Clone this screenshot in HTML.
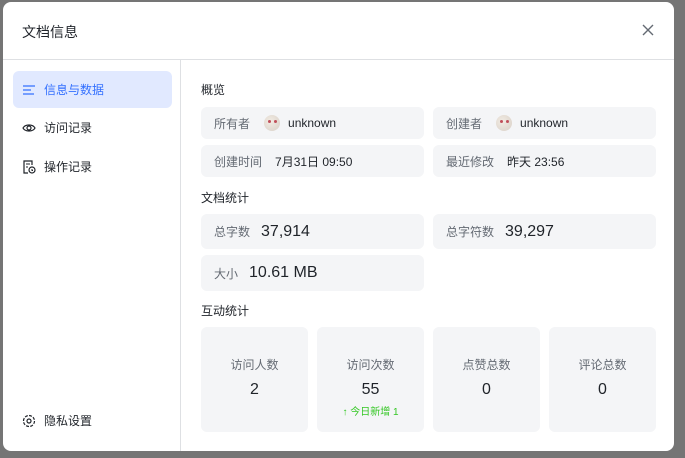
<!DOCTYPE html>
<html><head><meta charset="utf-8"><style>
*{margin:0;padding:0;box-sizing:border-box}
body{width:685px;height:458px;background:#757575;font-family:"Liberation Sans","Noto Sans CJK SC",sans-serif;position:relative;overflow:hidden;color:#1f2329}
.m{position:absolute;left:3px;top:2px;width:671px;height:449px;background:#fff;border-radius:8px;overflow:hidden}
.hd{position:absolute;left:0;top:0;width:100%;height:58px;border-bottom:1px solid #dee0e3}
.hd .t{position:absolute;left:19px;top:20px;font-size:14px}
.x{position:absolute;left:638px;top:21px}
.sd{position:absolute;left:0;top:58px;width:178px;bottom:0;border-right:1px solid #dee0e3}
.it{position:absolute;left:10px;width:159px;height:37px;border-radius:6px;font-size:12px;display:flex;align-items:center;padding-left:9px}
.it svg{margin-right:8px}
.on{background:#e1e9ff;color:#3370ff}
.sec{position:absolute;font-size:12px;color:#1f2329}
.c{position:absolute;background:#f4f5f7;border-radius:6px;font-size:12px;display:flex;align-items:center;padding-left:13px}
.c .l{color:#646a73;margin-right:13px}
.av{width:16px;height:16px;border-radius:50%;background:radial-gradient(circle at 40% 40%,#f2ece4,#d8cfc6);margin:0 8px 0 14px;position:relative}
.av:after{content:"";position:absolute;left:4px;top:5px;width:3px;height:3px;background:#c0505a;border-radius:50%;box-shadow:6px 0 #c0505a}
.b{font-size:16px;color:#1f2329}
.s{position:absolute;top:325px;width:107px;height:105px;background:#f4f5f7;border-radius:6px;text-align:center}
.s .a{margin-top:29px;font-size:12px;color:#646a73}
.s .n{margin-top:8px;font-size:16px}
.s .g{margin-top:4px;font-size:10px;color:#34c724}
</style></head><body>
<div class="m">
<div class="hd"><div class="t">文档信息</div>
<svg class="x" width="14" height="14" viewBox="0 0 14 14"><path d="M2 2L12 12M12 2L2 12" stroke="#646a73" stroke-width="1.4"/></svg></div>
<div class="sd">
<div class="it on" style="top:11px"><svg width="14" height="12" viewBox="0 0 14 12"><path d="M1 2H13M1 6H9M1 10H12" stroke="#3370ff" stroke-width="1.3"/></svg>信息与数据</div>
<div class="it" style="top:49px"><svg width="14" height="12" viewBox="0 0 14 12"><path d="M1 6C3 2 11 2 13 6C11 10 3 10 1 6Z" fill="none" stroke="#1f2329" stroke-width="1.2"/><circle cx="7" cy="6" r="2" fill="none" stroke="#1f2329" stroke-width="1.2"/></svg>访问记录</div>
<div class="it" style="top:88px"><svg width="14" height="14" viewBox="0 0 14 14"><path d="M6 13H2V1H10V5" fill="none" stroke="#1f2329" stroke-width="1.2"/><circle cx="10" cy="10" r="3" fill="none" stroke="#1f2329" stroke-width="1.2"/><path d="M4 4H8M4 7H6M10 9V10.5H11" stroke="#1f2329" stroke-width="1"/></svg>操作记录</div>
<div class="it" style="top:342px"><svg width="14" height="14" viewBox="0 0 14 14"><circle cx="7" cy="7" r="5.5" fill="none" stroke="#1f2329" stroke-width="1.2" stroke-dasharray="3 1.3"/><circle cx="7" cy="7" r="2" fill="none" stroke="#1f2329" stroke-width="1.2"/></svg>隐私设置</div>
</div>
<div class="sec" style="left:198px;top:79px">概览</div>
<div class="c" style="left:198px;top:105px;width:223px;height:32px"><span class="l" style="margin-right:0">所有者</span><span class="av"></span>unknown</div>
<div class="c" style="left:430px;top:105px;width:223px;height:32px"><span class="l" style="margin-right:0">创建者</span><span class="av"></span>unknown</div>
<div class="c" style="left:198px;top:143px;width:223px;height:32px"><span class="l">创建时间</span>7月31日 09:50</div>
<div class="c" style="left:430px;top:143px;width:223px;height:32px"><span class="l">最近修改</span>昨天 23:56</div>
<div class="sec" style="left:198px;top:187px">文档统计</div>
<div class="c" style="left:198px;top:212px;width:223px;height:35px"><span class="l" style="margin-right:11px">总字数</span><span class="b">37,914</span></div>
<div class="c" style="left:430px;top:212px;width:223px;height:35px"><span class="l" style="margin-right:11px">总字符数</span><span class="b">39,297</span></div>
<div class="c" style="left:198px;top:253px;width:223px;height:36px"><span class="l" style="margin-right:11px">大小</span><span class="b">10.61 MB</span></div>
<div class="sec" style="left:198px;top:300px">互动统计</div>
<div class="s" style="left:198px"><div class="a">访问人数</div><div class="n">2</div></div>
<div class="s" style="left:314px"><div class="a">访问次数</div><div class="n">55</div><div class="g">↑ 今日新增 1</div></div>
<div class="s" style="left:430px"><div class="a">点赞总数</div><div class="n">0</div></div>
<div class="s" style="left:546px"><div class="a">评论总数</div><div class="n">0</div></div>
</div>
</body></html>
